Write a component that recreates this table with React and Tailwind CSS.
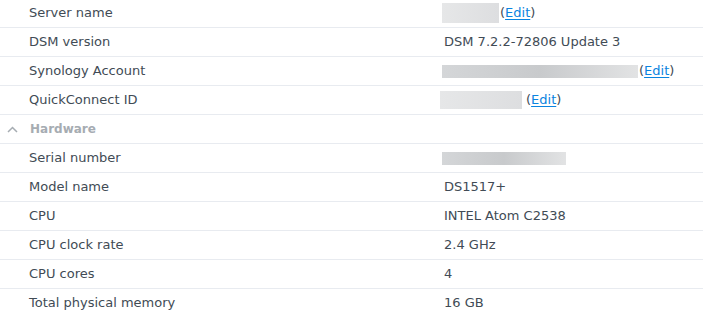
const general = [
  { label: 'Server name', value: <Masked w="w-[57px]" h="h-[20px]" edit /> },
  { label: 'DSM version', value: 'DSM 7.2.2-72806 Update 3' },
  { label: 'Synology Account', value: <Masked w="w-[196px]" h="h-[13px]" edit grad /> },
  { label: 'QuickConnect ID', value: <Masked w="w-[82px]" h="h-[18px]" edit gap shift /> },
];

const hardware = [
  { label: 'Serial number', value: <Masked w="w-[124px]" h="h-[13px]" grad /> },
  { label: 'Model name', value: 'DS1517+' },
  { label: 'CPU', value: 'INTEL Atom C2538' },
  { label: 'CPU clock rate', value: '2.4 GHz' },
  { label: 'CPU cores', value: '4' },
  { label: 'Total physical memory', value: '16 GB' },
];

function Masked({ w, h, edit, grad, gap, shift }) {
  return (
    <span className={`flex items-center ${shift ? '-ml-[4px]' : '-ml-[2px]'}`}>
      <span
        className={`${w} ${h} ${
          grad
            ? 'bg-gradient-to-r from-[#d4d6d8] via-[#c8cacc] to-[#e2e3e4]'
            : 'bg-gradient-to-r from-[#e6e7e8] to-[#dddee0]'
        }`}
      />
      {edit && (
        <span className={gap ? 'ml-[4px]' : 'ml-px'}>
          (<a className="text-[#0a84e0] underline underline-offset-2">Edit</a>)
        </span>
      )}
    </span>
  );
}

function Row({ label, value }) {
  return (
    <div className="flex h-[29px] items-center border-b border-[#e8ebf0]">
      <div className="w-[444px] pl-[29px]">{label}</div>
      <div className="flex-1">{value}</div>
    </div>
  );
}

export default function App() {
  return (
    <div
      className="w-[703px] h-[317px] overflow-hidden bg-white text-[13px] text-[#414b55]"
      style={{ fontFamily: '"DejaVu Sans", Verdana, sans-serif' }}
    >
      <div className="-mt-px">
        {general.map((r) => (
          <Row key={r.label} {...r} />
        ))}
        <div className="flex h-[29px] items-center border-b border-[#e8ebf0] text-[12px] text-[#a6acb2] font-bold">
          <svg className="ml-[7px] mr-[12px]" width="11" height="7" viewBox="0 0 11 7" fill="none">
            <path d="M1 6 L5.5 1.5 L10 6" stroke="#a6acb2" strokeWidth="1.5" />
          </svg>
          Hardware
        </div>
        {hardware.map((r) => (
          <Row key={r.label} {...r} />
        ))}
      </div>
    </div>
  );
}
